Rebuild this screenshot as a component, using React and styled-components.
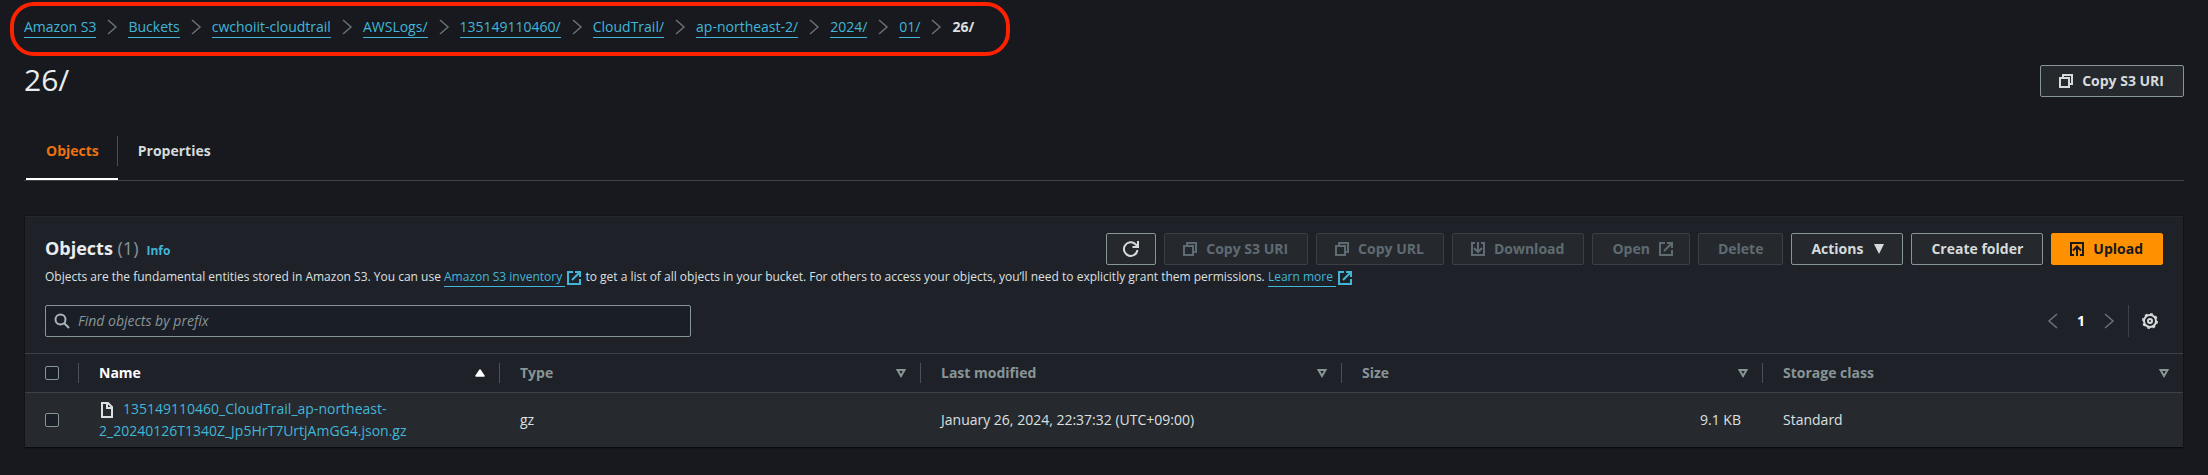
import React, { useState } from 'react'
import styled, { createGlobalStyle, css } from 'styled-components';

const crumbs = [
    'Amazon S3',
    'Buckets',
    'cwchoiit-cloudtrail',
    'AWSLogs/',
    '135149110460/',
    'CloudTrail/',
    'ap-northeast-2/',
    '2024/',
    '01/',
];

const columns = [
    { id: 'name', label: 'Name', sorted: true },
    { id: 'type', label: 'Type' },
    { id: 'modified', label: 'Last modified' },
    { id: 'size', label: 'Size' },
    { id: 'storage', label: 'Storage class' },
];

const objects = [
    {
        name: '135149110460_CloudTrail_ap-northeast-2_20240126T1340Z_Jp5HrT7UrtjAmGG4.json.gz',
        type: 'gz',
        modified: 'January 26, 2024, 22:37:32 (UTC+09:00)',
        size: '9.1 KB',
        storage: 'Standard',
    },
];

const iconPaths = {
    copy: <><path d="M2 5h9v9H2z" /><path d="M5 5V2h9v9h-3" /></>,
    external: <><path d="M7 2H2v12h12V9" /><path d="M9 2h5v5M14 2L6 10" /></>,
    download: <><path d="M5 2H2v12h12V2h-3" /><path d="M8 1v9M4 7l4 4 4-4" /></>,
    upload: <><path d="M5 14H2V2h12v12h-3" /><path d="M8 15V6M4 9.500l4-4 4 4" /></>,
    refresh: <><path d="M14.500 9A6.800 6.800 0 1 1 12.500 3.200L14.500 5.500" /><path d="M15 0v6H9.500" /></>,
    search: <><circle cx="6.500" cy="6.500" r="5" /><path d="M10 10l5 5" /></>,
    file: <><path d="M3 1h6l4 4v10H3z" /><path d="M8 1v5h5" /></>,
    left: <path d="M12 1L4 8l8 7" />,
    right: <path d="M4 1l8 7-8 7" />,
    gear: <>
        <circle cx="8" cy="8" r="2" />
        <circle cx="8" cy="8" r="6" />
        <circle cx="8" cy="8" r="7.200" strokeWidth="1.600" strokeDasharray="2.800 2.855" />
    </>,
    down: <path d="M3 3h10L8 13z" fill="currentColor" stroke="none" />,
    sortUp: <path d="M4 11h8L8 5z" fill="currentColor" strokeWidth="1.500" strokeLinejoin="round" />,
    sortDown: <path d="M4.500 5h7L8 11z" />,
};

const Icon = ({name}) => (
    <Svg viewBox="0 0 16 16" aria-hidden="true">{iconPaths[name]}</Svg>
)

export default function App() {

    const [query, setQuery] = useState('');

    return (
        <>
            <GlobalStyle />
            <Page>
                <Breadcrumbs aria-label="Breadcrumbs">
                    {crumbs.map(crumb=>(
                        <React.Fragment key={crumb}>
                            <CrumbLink href="#">{crumb}</CrumbLink>
                            <Separator><Icon name="right" /></Separator>
                        </React.Fragment>
                    ))}
                    <CurrentCrumb>26/</CurrentCrumb>
                </Breadcrumbs>

                <PageHeader>
                    <h1>26/</h1>
                    <Button $icon="start"><Icon name="copy" />Copy S3 URI</Button>
                </PageHeader>

                <Tabs role="tablist">
                    <Tab role="tab" aria-selected="true" $active><span>Objects</span></Tab>
                    <Tab role="tab" aria-selected="false"><span>Properties</span></Tab>
                </Tabs>

                <Panel>
                    <Toolbar>
                        <Heading>
                            <h2>Objects <span>(1)</span></h2>
                            <InfoLink href="#">Info</InfoLink>
                        </Heading>
                        <Actions>
                            <Button $icon="only" aria-label="Refresh"><Icon name="refresh" /></Button>
                            <Button $icon="start" disabled><Icon name="copy" />Copy S3 URI</Button>
                            <Button $icon="start" disabled><Icon name="copy" />Copy URL</Button>
                            <Button $icon="start" disabled><Icon name="download" />Download</Button>
                            <Button $icon="end" disabled>Open<Icon name="external" /></Button>
                            <Button disabled>Delete</Button>
                            <Button $icon="end">Actions<Icon name="down" /></Button>
                            <Button>Create folder</Button>
                            <Button $icon="start" $primary><Icon name="upload" />Upload</Button>
                        </Actions>
                    </Toolbar>
                    <Description>
                        Objects are the fundamental entities stored in Amazon S3. You can use{' '}
                        <ExternalLink href="#"><span>Amazon S3 inventory </span><Icon name="external" /></ExternalLink>
                        {' '}to get a list of all objects in your bucket. For others to access your objects, you’ll need to explicitly grant them permissions.{' '}
                        <ExternalLink href="#"><span>Learn more </span><Icon name="external" /></ExternalLink>
                    </Description>
                    <Filters>
                        <SearchBox>
                            <Icon name="search" />
                            <input
                                type="text"
                                aria-label="Find objects by prefix"
                                placeholder="Find objects by prefix"
                                value={query}
                                onChange={e=>setQuery(e.target.value)}
                            />
                        </SearchBox>
                        <Pagination>
                            <PageButton disabled aria-label="Previous page"><Icon name="left" /></PageButton>
                            <PageButton $current>1</PageButton>
                            <PageButton disabled aria-label="Next page"><Icon name="right" /></PageButton>
                            <Settings aria-label="Preferences"><Icon name="gear" /></Settings>
                        </Pagination>
                    </Filters>

                    <Table>
                        <thead>
                            <tr>
                                <SelectHead><Checkbox type="checkbox" aria-label="Select all objects" /></SelectHead>
                                {columns.map(col=>(
                                    <Head key={col.id} $sorted={col.sorted}>
                                        <div>
                                            {col.label}
                                            <Icon name={col.sorted ? 'sortUp' : 'sortDown'} />
                                        </div>
                                    </Head>
                                ))}
                            </tr>
                        </thead>
                        <tbody>
                            {objects.map(obj=>(
                                <tr key={obj.name}>
                                    <SelectCell><Checkbox type="checkbox" aria-label={`Select ${obj.name}`} /></SelectCell>
                                    <Cell>
                                        <ObjectName>
                                            <Icon name="file" />
                                            <a href="#">{obj.name}</a>
                                        </ObjectName>
                                    </Cell>
                                    <Cell>{obj.type}</Cell>
                                    <Cell>{obj.modified}</Cell>
                                    <Cell $right>{obj.size}</Cell>
                                    <Cell>{obj.storage}</Cell>
                                </tr>
                            ))}
                        </tbody>
                    </Table>
                </Panel>
            </Page>
        </>
    )
}

const GlobalStyle = createGlobalStyle`
  * {
    box-sizing: border-box;
  }
  body {
    margin: 0;
    background: #17191e;
    color: #dbe0e0;
    font-family: "Open Sans", "Noto Sans", sans-serif;
    font-size: 14px;
    line-height: 22px;
  }
  button, input {
    font: inherit;
  }
  a {
    color: #41b6d8;
    text-decoration: none;
  }
`;

const Svg = styled.svg`
  width: 16px;
  height: 16px;
  flex: none;
  fill: none;
  stroke: currentColor;
  stroke-width: 2;
`;

const Page = styled.main`
  padding: 2px 24px 28px 10px;
`;

const Breadcrumbs = styled.nav`
  display: flex;
  align-items: center;
  width: fit-content;
  height: 54px;
  padding: 0 32px 4px 10px;
  border: 4px solid #ff2200;
  border-radius: 24px;
`;

const CrumbLink = styled.a`
  line-height: 20px;
  border-bottom: 1px solid;
`;

const Separator = styled.span`
  display: flex;
  padding: 0 8px;
  color: #687078;
  svg {
    stroke-width: 1.5;
  }
`;

const CurrentCrumb = styled.span`
  font-weight: 700;
`;

const PageHeader = styled.header`
  display: flex;
  align-items: center;
  justify-content: space-between;
  padding: 8px 0 0 14px;
  h1 {
    margin: 0;
    padding-bottom: 2px;
    font-size: 30px;
    line-height: 32px;
    font-weight: 400;
    color: #eaeded;
  }
`;

const buttonPadding = {
    start: '0 19px 0 17px',
    end: '0 15px 0 19px',
    only: '0 16px',
};

const Button = styled.button`
  display: inline-flex;
  align-items: center;
  gap: 8px;
  height: 32px;
  padding: ${({$icon}) => buttonPadding[$icon] || '0 19px'};
  border: 1px solid #879596;
  border-radius: 2px;
  background: #25282d;
  color: #d5dbdb;
  font-weight: 700;
  white-space: nowrap;
  &:disabled {
    border-color: #3b4048;
    color: #5f6b72;
  }
  ${({$primary}) => $primary && css`
    border-color: #ff9000;
    background: #ff9000;
    color: #17191e;
  `}
`;

const Tabs = styled.div`
  display: flex;
  margin-left: 14px;
  padding: 32px 0 0 2px;
  border-bottom: 1px solid #3d4149;
`;

const Tab = styled.button`
  padding: 6px 0 12px;
  border: 0;
  border-bottom: 2px solid ${({$active}) => $active ? '#ffffff' : 'transparent'};
  background: none;
  color: ${({$active}) => $active ? '#ec7211' : '#d5dbdb'};
  font-weight: 700;
  span {
    display: block;
    padding: 4px 18px 4px 20px;
    border-right: 1px solid ${({$active}) => $active ? '#4b5058' : 'transparent'};
  }
`;

const Panel = styled.section`
  margin: 35px 1px 0 15px;
  border-top: 1px solid #26282d;
  background: #1f2129;
  box-shadow: 0 1px 1px #0a0b0e, 0 0 1px #0a0b0e;
`;

const Toolbar = styled.div`
  display: flex;
  align-items: center;
  justify-content: space-between;
  padding: 16px 20px 0;
`;

const Heading = styled.div`
  display: flex;
  align-items: baseline;
  gap: 8px;
  h2 {
    margin: 0;
    font-size: 18px;
    font-weight: 700;
    color: #eaeded;
  }
  h2 span {
    font-weight: 400;
    color: #879596;
  }
`;

const InfoLink = styled.a`
  font-size: 12px;
  font-weight: 700;
`;

const Actions = styled.div`
  display: flex;
  gap: 8px;
`;

const Description = styled.p`
  margin: 0;
  padding: 0 20px;
  font-size: 12px;
  line-height: 24px;
`;

const ExternalLink = styled.a`
  span {
    padding-bottom: 1px;
    border-bottom: 1px solid;
    white-space: pre;
  }
  svg {
    margin-left: 1px;
    vertical-align: middle;
  }
`;

const Filters = styled.div`
  display: flex;
  align-items: center;
  justify-content: space-between;
  padding: 16px 20px;
`;

const SearchBox = styled.label`
  display: flex;
  align-items: center;
  gap: 8px;
  flex: 0 1 646px;
  height: 32px;
  padding: 0 8px;
  border: 1px solid #879596;
  border-radius: 2px;
  background: #1a1e26;
  color: #aab7b8;
  input {
    flex: 1;
    min-width: 0;
    padding: 0;
    border: 0;
    outline: 0;
    background: none;
    color: #d5dbdb;
  }
  input::placeholder {
    color: #879596;
    font-style: italic;
  }
`;

const Pagination = styled.div`
  display: flex;
  align-items: center;
`;

const PageButton = styled.button`
  display: flex;
  justify-content: center;
  width: 28px;
  padding: 0;
  border: 0;
  background: none;
  color: ${({$current}) => $current ? '#ffffff' : '#6b737c'};
  font-weight: 700;
  svg {
    stroke-width: 1.5;
  }
`;

const Settings = styled.button`
  display: flex;
  align-items: center;
  height: 32px;
  margin-left: 5px;
  padding: 0 5px 0 13px;
  border: 0;
  border-left: 1px solid #3d4149;
  background: none;
  color: #d5dbdb;
  svg {
    overflow: visible;
  }
`;

const Table = styled.table`
  width: 100%;
  table-layout: fixed;
  border-collapse: collapse;
  thead tr {
    height: 39px;
    border-top: 1px solid #3d4149;
    border-bottom: 1px solid #3d4149;
  }
  tbody tr {
    background: #26292d;
  }
`;

const SelectHead = styled.th`
  width: 53px;
  padding: 0 0 0 20px;
`;

const SelectCell = styled.td`
  padding: 0 0 0 20px;
`;

const Checkbox = styled.input`
  display: block;
  appearance: none;
  width: 14px;
  height: 14px;
  margin: 0;
  border: 1px solid #879596;
  border-radius: 2px;
  background: #1a1e26;
`;

const Head = styled.th`
  padding: 0;
  text-align: left;
  font-weight: 700;
  color: ${({$sorted}) => $sorted ? '#ffffff' : '#879596'};
  div {
    display: flex;
    align-items: center;
    justify-content: space-between;
    height: 20px;
    padding: 0 11px 0 20px;
    border-left: 1px solid #4b5058;
  }
`;

const Cell = styled.td`
  padding: 5px 21px;
  text-align: ${({$right}) => $right ? 'right' : 'left'};
`;

const ObjectName = styled.span`
  svg {
    margin-right: 8px;
    vertical-align: middle;
  }
`;
